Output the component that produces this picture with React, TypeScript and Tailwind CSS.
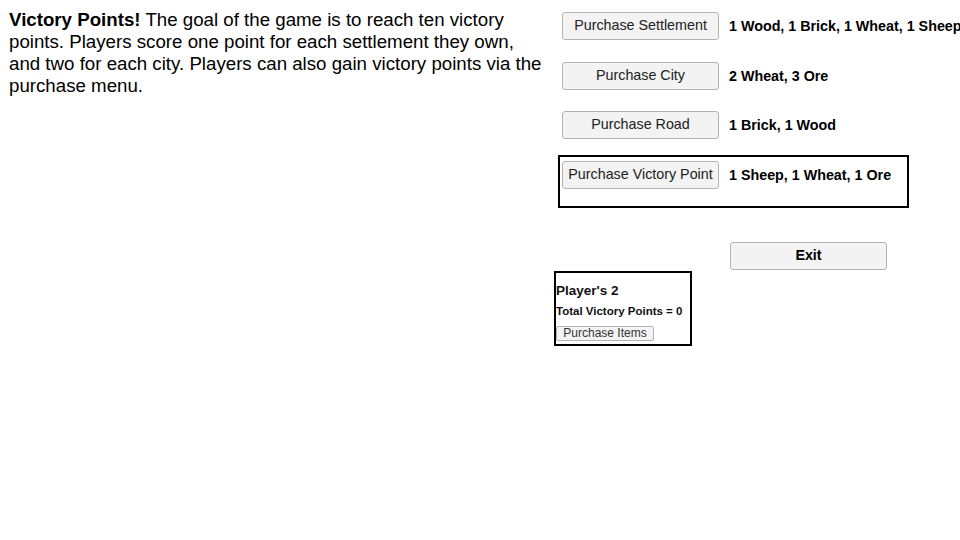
import React from 'react';

const costs = [
  { label: 'Purchase Settlement', cost: '1 Wood, 1 Brick, 1 Wheat, 1 Sheep', h: 'h-[50px]' },
  { label: 'Purchase City', cost: '2 Wheat, 3 Ore', h: 'h-[49px]' },
  { label: 'Purchase Road', cost: '1 Brick, 1 Wood', h: 'h-[50px]' },
];

function BuyButton({ label }: { label: string }) {
  return (
    <button className="w-[157px] h-[28px] shrink-0 rounded-[3px] border border-[#b3b3b3] bg-[#f3f3f3] text-[14.3px] text-[#222] whitespace-nowrap">
      {label}
    </button>
  );
}

export default function App() {
  return (
    <div
      className="w-[960px] h-[540px] overflow-hidden bg-white flex text-black"
      style={{ fontFamily: '"Liberation Sans", Arial, sans-serif' }}
    >
      {/* Rules blurb */}
      <div className="w-[558px] shrink-0 pl-[9px] pr-[12px] pt-[9px]">
        <p className="text-[18.7px] leading-[22px]">
          <span className="font-bold">Victory Points!</span> The goal of the game is to reach ten victory
          points. Players score one point for each settlement they own, and two for each city. Players can also
          gain victory points via the purchase menu.
        </p>
      </div>

      {/* Purchase menu */}
      <div className="flex flex-col pt-[6px]">
        {costs.map((c) => (
          <div key={c.label} className={`${c.h} border-2 border-transparent pt-[4px] pl-[2px] flex items-start gap-[10px]`}>
            <BuyButton label={c.label} />
            <span className="text-[14.3px] font-bold leading-[28px] whitespace-nowrap">{c.cost}</span>
          </div>
        ))}
        <div className="w-[351px] h-[53px] border-2 border-black pt-[4px] pl-[2px] flex items-start gap-[10px]">
          <BuyButton label="Purchase Victory Point" />
          <span className="text-[14.3px] font-bold leading-[28px] whitespace-nowrap">1 Sheep, 1 Wheat, 1 Ore</span>
        </div>

        <button className="mt-[34px] ml-[172px] w-[157px] h-[28px] rounded-[3px] border border-[#b3b3b3] bg-[#f3f3f3] text-[14.3px] font-bold">
          Exit
        </button>

        <div className="mt-[1px] ml-[-4px] w-[138px] h-[75px] border-2 border-black flex flex-col pt-[10px]">
          <span className="text-[13.5px] font-bold leading-[16px] text-[#111]">Player's 2</span>
          <span className="mt-[6px] text-[11.5px] font-bold leading-[13px] text-[#111] whitespace-nowrap">
            Total Victory Points = 0
          </span>
          <button className="mt-[8px] w-[98px] h-[15px] rounded-[2px] border border-[#b3b3b3] bg-[#f3f3f3] text-[12px] leading-[13px] text-[#333]">
            Purchase Items
          </button>
        </div>
      </div>
    </div>
  );
}
